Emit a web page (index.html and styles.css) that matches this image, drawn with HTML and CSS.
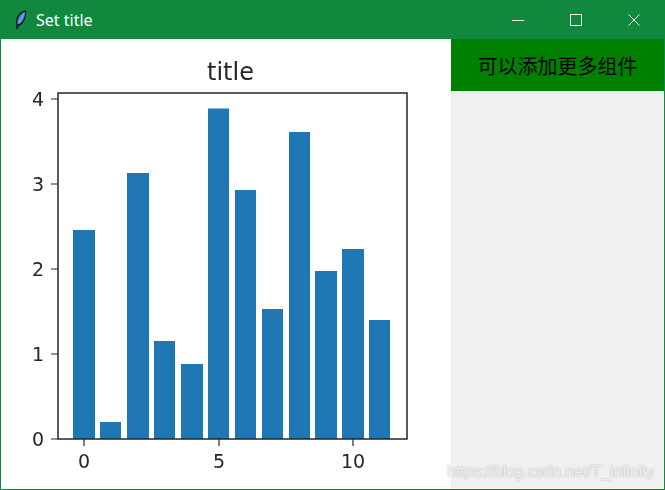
FILE: index.html
```html
<!DOCTYPE html>
<html lang="zh">
<head>
<meta charset="utf-8">
<title>Set title</title>
<link rel="stylesheet" href="styles.css">
</head>
<body>
<div class="window">
  <header class="titlebar">
    <svg class="app-icon" viewBox="0 0 12 19" width="12" height="19" aria-hidden="true">
      <path d="M11 .2C8 .4 3.600 3 1.800 7.400 1 10 .8 12.400 1.400 14.500L1 18.800 3 19 3.800 16C7 15.400 9 12 10 9 11 6 11.600 3 11 .2Z" fill="#10222c"/>
      <path d="M10 1.700C7.600 2.700 4.600 5 3.200 8.400 2.400 10.400 2.200 12.400 2.600 14.200 5.600 13.800 7.800 11 8.900 8.200 9.700 5.900 10.200 3.800 10 1.700Z" fill="#4f86d8"/>
      <path d="M8.800 3.500 3.800 13.500" stroke="#a9c8ef" stroke-width=".8" fill="none"/>
    </svg>
    <span class="title-text">Set title</span>
    <div class="controls">
      <span class="control"><svg viewBox="0 0 12 12" width="12" height="12" aria-hidden="true"><path d="M0 6.500H12" class="glyph"/></svg></span>
      <span class="control"><svg viewBox="0 0 12 12" width="12" height="12" aria-hidden="true"><rect x=".5" y=".5" width="11" height="11" class="glyph"/></svg></span>
      <span class="control"><svg viewBox="0 0 12 12" width="12" height="12" aria-hidden="true"><path d="M.5 .5 11.500 11.500M11.500 .5 .5 11.500" class="glyph"/></svg></span>
    </div>
  </header>
  <main class="content">
    <section class="figure">
      <svg class="plot" viewBox="1 0 450 450" width="450" height="450" role="img" aria-label="bar chart">
        <g class="bars">
          <rect x="73" y="191" width="22" height="209"/>
          <rect x="100" y="383" width="21" height="17"/>
          <rect x="127" y="134" width="22" height="266"/>
          <rect x="154" y="302" width="21" height="98"/>
          <rect x="181" y="325" width="22" height="75"/>
          <rect x="208" y="69.500" width="21" height="330.500"/>
          <rect x="235" y="151" width="21" height="249"/>
          <rect x="262" y="270" width="21" height="130"/>
          <rect x="289" y="93" width="21" height="307"/>
          <rect x="315" y="232" width="22" height="168"/>
          <rect x="342" y="210" width="22" height="190"/>
          <rect x="369" y="281" width="21" height="119"/>
        </g>
        <rect class="frame" x="58" y="54" width="349" height="346"/>
        <path class="ticks" d="M51 60H58M51 145H58M51 230H58M51 315H58M51 400H58M84 400V407M219 400V407M353 400V407"/>
        <text class="plot-title" x="230.500" y="41">title</text>
        <text class="tick-y" x="44" y="67">4</text>
        <text class="tick-y" x="44" y="152">3</text>
        <text class="tick-y" x="44" y="237">2</text>
        <text class="tick-y" x="44" y="322">1</text>
        <text class="tick-y" x="44" y="407">0</text>
        <text class="tick-x" x="84" y="429">0</text>
        <text class="tick-x" x="219" y="429">5</text>
        <text class="tick-x" x="353" y="429">10</text>
      </svg>
    </section>
    <aside class="side">
      <div class="note">可以添加更多组件</div>
    </aside>
  </main>
  <div class="watermark">https://blog.csdn.net/T_infinity</div>
</div>
</body>
</html>
```
FILE: styles.css
```css
* { box-sizing: border-box; }
html, body { margin: 0; padding: 0; }
body { width: 665px; height: 490px; overflow: hidden; background: #fff; }
.window {
  position: relative;
  width: 665px;
  height: 490px;
  display: flex;
  flex-direction: column;
  border: 1px solid #10893e;
  border-top: 0;
}
.titlebar {
  flex: 0 0 39px;
  margin: 0 -1px;
  display: flex;
  align-items: center;
  padding-left: 15px;
  background: #10893e;
  color: #fff;
}
.app-icon { flex: none; }
.title-text {
  margin-left: 9px;
  font: 16px "Noto Sans", "Open Sans", sans-serif;
}
.controls { margin-left: auto; display: flex; padding-right: 2px; }
.control { width: 58px; height: 39px; display: flex; align-items: center; justify-content: center; }
.glyph { fill: none; stroke: #fff; stroke-width: 1; }
.content { flex: 1; display: flex; min-height: 0; }
.figure { flex: 0 0 450px; background: #fff; }
.plot { display: block; filter: blur(.4px); }
.bars rect { fill: #1f77b4; }
.frame { fill: none; stroke: #262626; stroke-width: 1.500; }
.ticks { fill: none; stroke: #262626; stroke-width: 1.200; }
.plot-title, .tick-y, .tick-x { font-family: "DejaVu Sans", sans-serif; fill: #262626; }
.plot-title { font-size: 24px; text-anchor: middle; }
.tick-y { font-size: 19px; text-anchor: end; }
.tick-x { font-size: 19px; text-anchor: middle; }
.side { flex: 1; background: #f0f0f0; }
.note {
  height: 52px;
  display: flex;
  align-items: center;
  justify-content: center;
  background: #008000;
  color: #000;
  font: 20px "Noto Sans CJK SC", sans-serif;
}
.watermark {
  position: absolute;
  left: 446px;
  bottom: 8px;
  font: 16px "Liberation Sans", sans-serif;
  letter-spacing: -.14px;
  color: rgba(255, 255, 255, .8);
  text-shadow: 0 0 1.500px rgba(0, 0, 0, .35);
}
```
